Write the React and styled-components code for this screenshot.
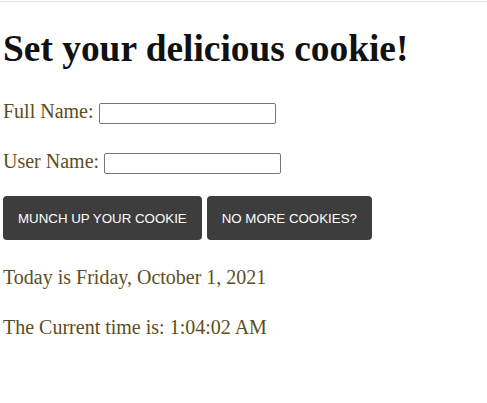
import React, { useState } from 'react';
import styled, { createGlobalStyle } from 'styled-components';

const GlobalStyle = createGlobalStyle`
  body {
    margin: 0;
    background: #ffffff;
    font-family: "Liberation Serif", "Times New Roman", serif;
  }
`;

const TopRule = styled.div`
  height: 1px;
  margin-top: 1px;
  background-color: #e2e2e2;
`;

const Page = styled.div`
  display: flex;
  flex-direction: column;
  gap: 20px;
  padding: 0 0 0 3px;
  color: #5c4e21;
`;

const Title = styled.h1`
  margin: 25px 0 5px 0;
  font-size: 37.4px;
  line-height: 44px;
  font-weight: bold;
  color: #111111;
`;

const Row = styled.p`
  margin: 0;
  font-size: 20px;
  line-height: 30px;
`;

const TextInput = styled.input.attrs({ type: 'text' })`
  box-sizing: border-box;
  width: 177px;
  height: 21px;
  margin: 0;
  padding: 1px 2px;
  border: 1px solid #767676;
  border-radius: 2px;
  font-family: "Liberation Sans", Arial, sans-serif;
  font-size: 13px;
  vertical-align: baseline;
`;

const ButtonRow = styled.div`
  display: flex;
  gap: 5px;
  margin-bottom: 2px;
`;

const CookieBtn = styled.button`
  height: 44px;
  padding: 0 15px;
  border: none;
  border-radius: 4px;
  background-color: #3d3d3d;
  color: #ffffff;
  font-family: "Liberation Sans", Arial, sans-serif;
  font-size: 13.3px;
  text-transform: uppercase;
  cursor: pointer;
`;

const App = () => {
  const [fullName, setFullName] = useState('');
  const [userName, setUserName] = useState('');

  return (
    <>
      <GlobalStyle />
      <TopRule />
      <Page>
        <Title>Set your delicious cookie!</Title>
        <Row>
          Full Name: <TextInput value={fullName} onChange={(e) => setFullName(e.target.value)} />
        </Row>
        <Row>
          User Name: <TextInput value={userName} onChange={(e) => setUserName(e.target.value)} />
        </Row>
        <ButtonRow>
          <CookieBtn>Munch up your cookie</CookieBtn>
          <CookieBtn>No more cookies?</CookieBtn>
        </ButtonRow>
        <Row>Today is Friday, October 1, 2021</Row>
        <Row>The Current time is: 1:04:02 AM</Row>
      </Page>
    </>
  );
};

export default App;
